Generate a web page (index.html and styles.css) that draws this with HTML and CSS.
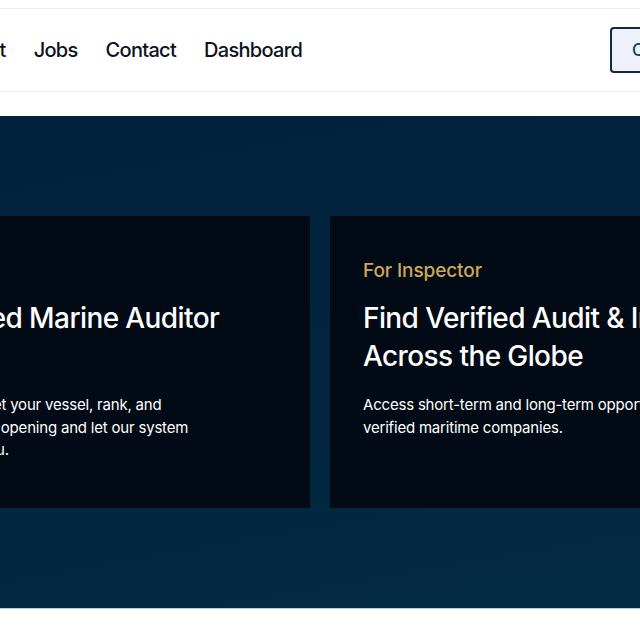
FILE: index.html
```html
<!DOCTYPE html>
<html lang="en">

<head>
    <meta charset="UTF-8">
    <meta name="viewport" content="width=device-width, initial-scale=1.0">
    <title>Marine Audit Jobs</title>
    <link rel="stylesheet" href="styles.css">
</head>

<body>
    <div class="page">
        <header class="header">
            <div class="header-inner">
                <a href="#" class="logo">MarineAudit</a>
                <nav class="nav">
                    <a href="#">Home</a>
                    <a href="#">About</a>
                    <a href="#">Jobs</a>
                    <a href="#">Contact</a>
                    <a href="#">Dashboard</a>
                </nav>
                <div class="actions">
                    <a href="#" class="btn-outline">Create Account</a>
                    <a href="#" class="btn-dark">Login</a>
                </div>
            </div>
        </header>

        <section class="hero">
            <div class="hero-inner">
                <div class="card">
                    <p class="card-label">For Ship Owners</p>
                    <h2>Work with a Certified Marine Auditor</h2>
                    <p class="card-text">Just post your audit requirement, set your vessel, rank, and
                        schedule and port call dates for the opening and let our system
                        find the best-suited surveyor for you.</p>
                </div>
                <div class="card">
                    <p class="card-label">For Inspector</p>
                    <h2>Find Verified Audit &amp; Inspection Jobs Across the Globe</h2>
                    <p class="card-text">Access short-term and long-term opportunities posted by
                        verified maritime companies.</p>
                </div>
            </div>
        </section>
    </div>
</body>

</html>
```

FILE: styles.css
```css
body {
    margin: 0;
    font-family: Inter, "Liberation Sans", sans-serif;
    background: #ffffff;
    overflow: hidden;
}

a {
    text-decoration: none;
}

/* the page is wider than the window, we see the middle of it */
.page {
    width: 1240px;
    margin-left: -300px;
    padding-top: 8px;
}

.header {
    border-top: 1px solid #ececec;
    border-bottom: 1px solid #ececec;
}

.header-inner {
    display: flex;
    align-items: center;
    height: 82px;
    padding: 0 20px;
}

.logo {
    width: 150px;
    font-size: 22px;
    font-weight: bold;
    color: #02233a;
}

.nav {
    display: flex;
    gap: 28px;
}

.nav a {
    font-size: 20px;
    font-weight: 500;
    letter-spacing: -0.7px;
    color: #0b1220;
}

.actions {
    display: flex;
    gap: 12px;
    margin-left: 308px;
}

.btn-outline,
.btn-dark {
    display: inline-block;
    padding: 11px 20px;
    font-size: 17px;
    font-weight: 500;
    border: 2px solid #0c2a40;
    border-radius: 4px;
}

.btn-outline {
    background: #eef1f9;
    color: #1d3f60;
}

.btn-dark {
    background: #0c2a40;
    color: #ffffff;
}

.hero {
    margin-top: 24px;
    padding: 100px 0;
    background: linear-gradient(170deg, #02213a, #022b41);
    border-bottom: 1px solid #b8cad6;
}

.hero-inner {
    display: grid;
    grid-template-columns: 1fr 1fr;
    gap: 20px;
    width: 1200px;
    margin: 0 auto;
}

.card {
    padding: 42px 33px 46px;
    background: #010a15;
}

.card-label {
    margin: 0 0 15px;
    font-size: 19px;
    font-weight: 500;
    line-height: 26px;
    letter-spacing: -0.1px;
    color: #cfa75c;
}

.card h2 {
    margin: 0 0 19px;
    max-width: 520px;
    min-height: 76px;
    font-size: 28px;
    font-weight: 500;
    line-height: 38px;
    letter-spacing: -0.6px;
    color: #ffffff;
}

.card-text {
    margin: 0;
    max-width: 450px;
    font-size: 15px;
    line-height: 22.5px;
    letter-spacing: -0.2px;
    color: #ffffff;
}
```
